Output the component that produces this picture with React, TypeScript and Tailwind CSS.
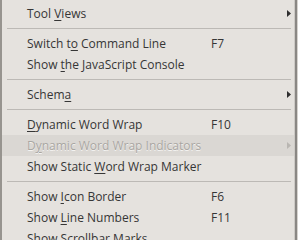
import React from "react";

type Item =
  | { type: "sep" }
  | {
      type: "item";
      pre: string;
      u: string;
      post: string;
      shortcut?: string;
      sub?: boolean;
      disabled?: boolean;
    };

const items: Item[] = [
  { type: "item", pre: "Tool ", u: "V", post: "iews", sub: true },
  { type: "sep" },
  { type: "item", pre: "Switch t", u: "o", post: " Command Line", shortcut: "F7" },
  { type: "item", pre: "Show ", u: "t", post: "he JavaScript Console" },
  { type: "sep" },
  { type: "item", pre: "Schem", u: "a", post: "", sub: true },
  { type: "sep" },
  { type: "item", pre: "", u: "D", post: "ynamic Word Wrap", shortcut: "F10" },
  { type: "item", pre: "D", u: "y", post: "namic Word Wrap Indicators", sub: true, disabled: true },
  { type: "item", pre: "Show Static ", u: "W", post: "ord Wrap Marker" },
  { type: "sep" },
  { type: "item", pre: "Show ", u: "I", post: "con Border", shortcut: "F6" },
  { type: "item", pre: "Show ", u: "L", post: "ine Numbers", shortcut: "F11" },
  { type: "item", pre: "Show Scrollbar Marks", u: "", post: "" },
];

function Arrow({ disabled }: { disabled?: boolean }) {
  return (
    <svg width="4" height="7" viewBox="0 0 4 7" className="shrink-0">
      <path d="M0 0 L4 3.5 L0 7 Z" fill={disabled ? "#b9b6b2" : "#2e2e2e"} />
    </svg>
  );
}

export default function App() {
  return (
    <div
      className="w-[298px] h-[240px] overflow-hidden flex bg-[#e5e2de]"
      style={{ fontFamily: '"Open Sans", "DejaVu Sans", sans-serif' }}
    >
      <div className="w-[2px] bg-[#97948f] shrink-0" />
      <div className="flex-1 flex flex-col pt-[3px] text-[12px] text-[#363636]">
        {items.map((it, i) =>
          it.type === "sep" ? (
            <div key={i} className="h-[9px] flex items-center pl-[5px] pr-[3px] shrink-0">
              <div className="h-[1px] w-full bg-[#bcb9b5]" />
            </div>
          ) : (
            <div
              key={i}
              className={
                "h-[21px] shrink-0 flex items-center pl-[25px] pr-[3px] " +
                (it.disabled ? "bg-[#dad7d3] text-[#a9a6a2]" : "")
              }
            >
              <div
                className="w-[184px] whitespace-nowrap leading-none"
                style={it.disabled ? { textShadow: "0 1px 0 #f4f3f1" } : undefined}
              >
                {it.pre}
                {it.u && (
                  <span className="underline underline-offset-[2px] decoration-1">{it.u}</span>
                )}
                {it.post}
              </div>
              <div className="leading-none whitespace-nowrap">{it.shortcut ?? ""}</div>
              <div className="ml-auto flex items-center">
                {it.sub && <Arrow disabled={it.disabled} />}
              </div>
            </div>
          )
        )}
      </div>
      <div className="w-[1px] bg-[#cdcac6] shrink-0" />
      <div className="w-[2px] bg-[#8a8784] shrink-0" />
      <div className="w-[1px] bg-[#d6d3cf] shrink-0" />
    </div>
  );
}
